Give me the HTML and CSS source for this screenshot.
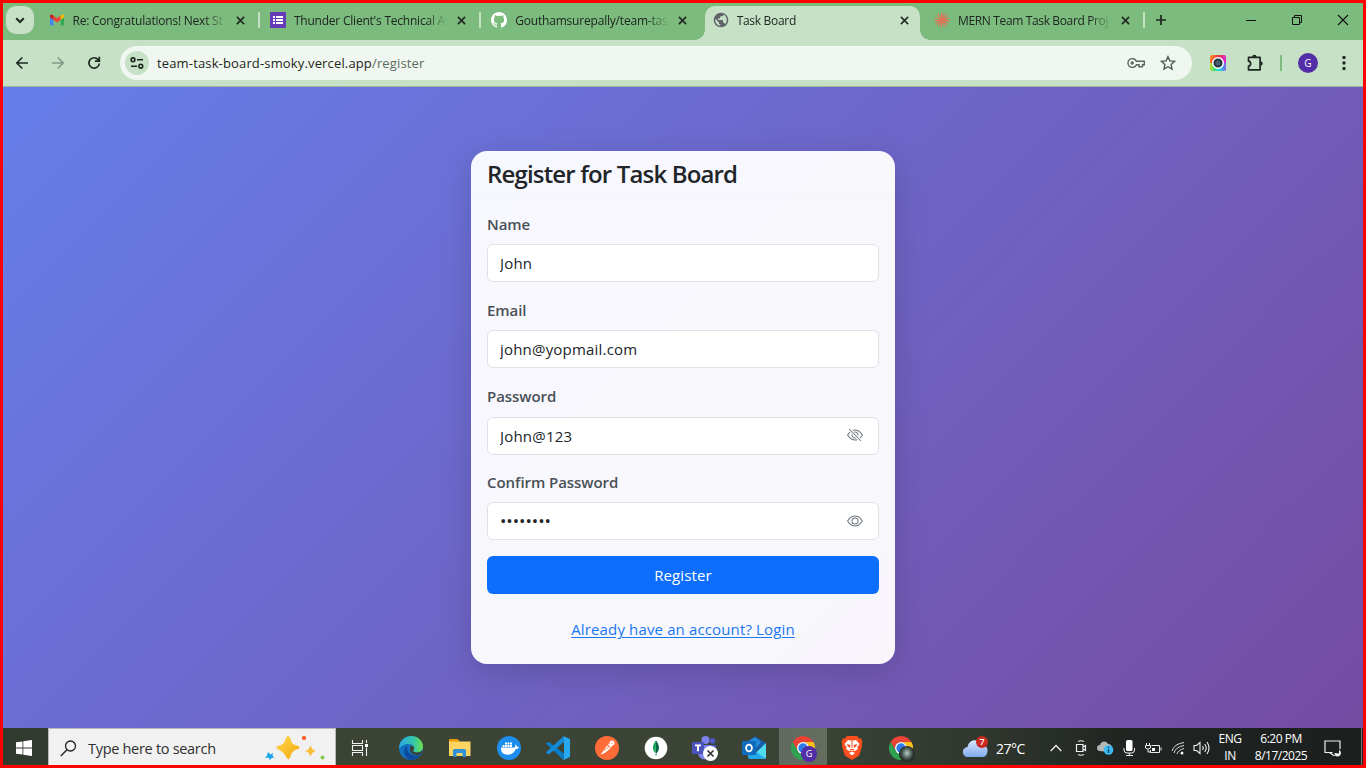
FILE: index.html
```html
<!DOCTYPE html>
<html lang="en">
<head>
<meta charset="utf-8">
<title>Task Board</title>
<link rel="stylesheet" href="styles.css">
</head>
<body>
<svg class="defs" aria-hidden="true">
  <symbol id="close" viewBox="0 0 10 10"><path d="M1 1l8 8M9 1L1 9" fill="none" stroke="#202622" stroke-width="1.7"/></symbol>
  <symbol id="chrome" viewBox="0 0 24 24">
    <path fill="#ea4335" d="M12 0a12 12 0 0 1 10.4 6H12a6 6 0 0 0-5.2 9L1.6 6A12 12 0 0 1 12 0"/>
    <path fill="#fbc116" d="M22.4 6A12 12 0 0 1 12 24l5.2-9A6 6 0 0 0 12 6z"/>
    <path fill="#30a14e" d="M12 24A12 12 0 0 1 1.6 6l5.2 9a6 6 0 0 0 10.4 0z"/>
    <circle cx="12" cy="12" r="6" fill="#fff"/><circle cx="12" cy="12" r="4.7" fill="#2e7bea"/>
  </symbol>
</svg>
<div class="screen">
  <div class="tabstrip">
    <div class="tab-search"><svg width="10" height="7" viewBox="0 0 10 7"><path d="M1.2 1.2L5 5l3.800-3.800" fill="none" stroke="#1e2620" stroke-width="2"/></svg></div>
    <div class="tab">
      <svg class="favicon" viewBox="0 0 16 16"><path fill="#4285f4" d="M1 4.500l3.300 2.400V13.500H2.200A1.200 1.200 0 0 1 1 12.300z"/><path fill="#34a853" d="M15 4.500l-3.300 2.400V13.500h2.100a1.200 1.200 0 0 0 1.200-1.200z"/><path fill="#ea4335" d="M4.300 3.500L8 6.300l3.700-2.800v4.300L8 10.500 4.300 7.800z"/><path fill="#c5221f" d="M1 4.200c0-1.700 1.800-2.300 3.300-.7v4.300L1 5.400z"/><path fill="#fbbc04" d="M15 4.200c0-1.700-1.800-2.300-3.300-.7v4.300L15 5.400z"/></svg>
      <span class="title t1">Re: Congratulations! Next St</span><svg class="x"><use href="#close"/></svg><i class="sep"></i>
    </div>
    <div class="tab">
      <svg class="favicon" viewBox="0 0 16 16"><rect width="16" height="16" rx="1" fill="#673ab7"/><path fill="#fff" d="M3 4h2v2H3zm3 0h7v2H6zM3 7h2v2H3zm3 0h7v2H6zM3 10h2v2H3zm3 0h7v2H6z"/></svg>
      <span class="title t2">Thunder Client's Technical As</span><svg class="x"><use href="#close"/></svg><i class="sep"></i>
    </div>
    <div class="tab">
      <svg class="favicon" viewBox="0 0 16 16"><path fill="#fff" d="M8 0C3.580 0 0 3.580 0 8c0 3.540 2.290 6.530 5.470 7.590.4.070.55-.17.55-.38 0-.19-.01-.82-.01-1.490-2.010.37-2.530-.49-2.690-.94-.09-.23-.48-.94-.82-1.130-.28-.15-.68-.52-.01-.53.63-.01 1.080.58 1.230.82.72 1.210 1.870.87 2.330.66.070-.52.28-.87.51-1.070-1.780-.2-3.640-.89-3.640-3.950 0-.87.31-1.590.82-2.150-.08-.2-.36-1.020.08-2.120 0 0 .67-.21 2.200.82.64-.18 1.320-.27 2-.27s1.360.09 2 .27c1.530-1.040 2.200-.82 2.200-.82.44 1.100.16 1.920.08 2.120.51.56.82 1.270.82 2.150 0 3.070-1.870 3.750-3.650 3.950.29.25.54.73.54 1.480 0 1.070-.01 1.930-.01 2.200 0 .21.15.46.55.38A8.010 8.010 0 0 0 16 8c0-4.420-3.580-8-8-8"/></svg>
      <span class="title t3">Gouthamsurepally/team-tas</span><svg class="x"><use href="#close"/></svg>
    </div>
    <div class="tab active">
      <svg class="favicon" viewBox="1 1 22 22"><path fill="#5f6368" d="M12 2C6.480 2 2 6.480 2 12s4.480 10 10 10 10-4.480 10-10S17.520 2 12 2zm-1 17.930c-3.950-.49-7-3.850-7-7.930 0-.62.08-1.210.21-1.790L9 15v1c0 1.100.9 2 2 2v1.930zm6.900-2.540c-.26-.81-1-1.390-1.900-1.390h-1v-3c0-.55-.45-1-1-1H8v-2h2c.55 0 1-.45 1-1V7h2c1.100 0 2-.9 2-2v-.41c2.930 1.190 5 4.060 5 7.410 0 2.080-.8 3.970-2.100 5.390z"/></svg>
      <span class="title t4">Task Board</span><svg class="x"><use href="#close"/></svg>
    </div>
    <div class="tab">
      <svg class="favicon" viewBox="0 0 16 16"><path d="M8 8L7.500.5M8 8l2.500-7M8 8l5.500-5M8 8l7-1.800M8 8l7.500 1M8 8l6 4.500M8 8l3 6.500M8 8l-.5 7.500M8 8l-3.500 6M8 8l-6 4.500M8 8L.5 9M8 8L1 5.500M8 8L3.500 2" stroke="#d97757" stroke-width="1.300"/></svg>
      <span class="title t5">MERN Team Task Board Proj</span><svg class="x"><use href="#close"/></svg><i class="sep"></i>
    </div>
    <svg class="plus" viewBox="0 0 12 12"><path d="M6 1v10M1 6h10" stroke="#1e2620" stroke-width="1.700"/></svg>
    <div class="winbtns">
      <svg width="12" height="12"><path d="M1 6.500h10" stroke="#111"/></svg>
      <svg width="12" height="12"><path d="M1.500 3.500h7v7h-7zM3.500 3.500v-2h7v7h-2" fill="none" stroke="#111"/></svg>
      <svg width="12" height="12"><path d="M1 1l10 10M11 1L1 11" stroke="#111" stroke-width="1.100"/></svg>
    </div>
  </div>

  <div class="toolbar">
    <div class="nav">
      <svg viewBox="0 0 14 14"><path d="M13 7H2M7.300 1.500L1.800 7l5.500 5.500" fill="none" stroke="#1e2620" stroke-width="1.600"/></svg>
      <svg viewBox="0 0 14 14"><path d="M1 7h11M6.700 1.500L12.200 7l-5.500 5.500" fill="none" stroke="#839886" stroke-width="1.600"/></svg>
      <svg viewBox="0 0 14 14"><path d="M12.300 7.500A5.200 5.200 0 1 1 11.200 3.700L12 4.500M12.300.8v4.400H8" fill="none" stroke="#1e2620" stroke-width="1.700"/></svg>
    </div>
    <div class="omnibox">
      <span class="site"><svg width="14" height="12" viewBox="0 0 14 12"><g fill="none" stroke="#1e2620" stroke-width="1.600"><circle cx="3" cy="2.800" r="1.900"/><path d="M7 2.800h6M1 9.200h6"/><circle cx="10.800" cy="9.200" r="1.900"/></g></svg></span>
      <span class="url">team-task-board-smoky.vercel.app<em>/register</em></span>
      <svg width="18" height="12" viewBox="0 0 18 12"><g fill="none" stroke="#5a665d" stroke-width="1.400"><path d="M9.400 4.300A4.400 4.400 0 1 0 9.400 7.700H12v2h3.500v-2h1.800V4.300z"/></g><circle cx="5.200" cy="6" r="1.700" fill="#5a665d"/></svg>
      <svg class="star" width="16" height="16" viewBox="0 0 16 16"><path d="M8 1.700l1.900 4.200 4.600.5-3.400 3.100.9 4.500-4-2.300L4 14l.9-4.500L1.500 6.400l4.600-.5z" fill="none" stroke="#505a53" stroke-width="1.400"/></svg>
    </div>
    <svg class="ext" width="16" height="16" viewBox="0 0 16 16"><defs><linearGradient id="ra" x2="1" y2=".3"><stop stop-color="#ff9a1c"/><stop offset=".5" stop-color="#f8383a"/><stop offset="1" stop-color="#d927d0"/></linearGradient><linearGradient id="rb" x2="1"><stop stop-color="#c5dc2c"/><stop offset=".3" stop-color="#35e07c"/><stop offset=".6" stop-color="#20d9f0"/><stop offset="1" stop-color="#8361ee"/></linearGradient></defs><path fill="url(#ra)" d="M0 8V2a2 2 0 0 1 2-2h12a2 2 0 0 1 2 2v6z"/><path fill="url(#rb)" d="M0 8v6a2 2 0 0 0 2 2h12a2 2 0 0 0 2-2V8z"/><circle cx="8" cy="8" r="5.300" fill="#263340" stroke="#fff" stroke-width="1.500"/><circle cx="8" cy="8" r="2.500" fill="#466071"/></svg>
    <svg class="puzzle" width="18" height="18" viewBox="0 0 18 18"><path d="M2.500 3.300h11.600v12.500H2.500v-3.600c2.800-.3 2.800-4.700 0-5z" fill="none" stroke="#1e2620" stroke-width="1.700" stroke-linejoin="round"/><path fill="#1e2620" d="M6.200 3a2.200 2.200 0 0 1 4.400 0zM14.500 7.300a2.200 2.200 0 0 1 0 4.400z"/></svg>
    <i class="tsep"></i>
    <span class="avatar">G</span>
    <svg class="dots" width="4" height="16"><g fill="#1e2620"><circle cx="2" cy="2.500" r="1.700"/><circle cx="2" cy="8" r="1.700"/><circle cx="2" cy="13.500" r="1.700"/></g></svg>
  </div>

  <main class="page">
    <form class="card">
      <h1 class="card-head"><span>Register for Task Board</span></h1>
      <div class="card-body">
        <div class="field"><label>Name</label><div class="box"><input type="text" value="John"></div></div>
        <div class="field"><label>Email</label><div class="box"><input type="text" value="john@yopmail.com"></div></div>
        <div class="field shown"><label>Password</label><div class="box"><input type="text" value="John@123"><svg class="eye" viewBox="0 0 16 16"><path d="M13.359 11.238C15.060 9.720 16 8 16 8s-3-5.500-8-5.500a7 7 0 0 0-2.790.588l.77.771A6 6 0 0 1 8 3.500c2.120 0 3.879 1.168 5.168 2.457A13 13 0 0 1 14.828 8q-.086.13-.195.288c-.335.48-.83 1.120-1.465 1.755q-.247.248-.517.486z"/><path d="M11.297 9.176a3.500 3.500 0 0 0-4.474-4.474l.823.823a2.500 2.500 0 0 1 2.829 2.829zm-2.943 1.299.822.822a3.500 3.500 0 0 1-4.474-4.474l.823.823a2.500 2.500 0 0 0 2.829 2.829"/><path d="M3.350 5.470q-.27.24-.518.487A13 13 0 0 0 1.172 8l.195.288c.335.48.83 1.120 1.465 1.755C4.121 11.332 5.881 12.500 8 12.500c.716 0 1.390-.133 2.020-.36l.77.772A7 7 0 0 1 8 13.500C3 13.500 0 8 0 8s.939-1.721 2.641-3.238l.708.709zm10.296 8.884-12-12 .708-.708 12 12z"/></svg></div></div>
        <div class="field"><label>Confirm Password</label><div class="box"><input class="masked" type="text" value="••••••••"><svg class="eye" viewBox="0 0 16 16"><path d="M16 8s-3-5.500-8-5.500S0 8 0 8s3 5.500 8 5.500S16 8 16 8M1.173 8a13 13 0 0 1 1.660-2.043C4.120 4.668 5.880 3.500 8 3.500s3.879 1.168 5.168 2.457A13 13 0 0 1 14.828 8q-.086.13-.195.288c-.335.48-.83 1.120-1.465 1.755C11.879 11.332 10.119 12.500 8 12.500s-3.879-1.168-5.168-2.457A13 13 0 0 1 1.172 8z"/><path d="M8 5.500a2.500 2.500 0 1 0 0 5 2.500 2.500 0 0 0 0-5M4.500 8a3.500 3.500 0 1 1 7 0 3.500 3.500 0 0 1-7 0"/></svg></div></div>
        <button class="submit" type="button">Register</button>
        <a class="login" href="#">Already have an account? Login</a>
      </div>
    </form>
  </main>

  <div class="taskbar">
    <div class="start"><svg width="16" height="16" viewBox="0 0 16 16"><path fill="#fff" d="M0 2.300l6.500-.9v6.100H0zM7.300 1.200L16 0v7.500H7.300zM0 8.400h6.500v6.200L0 13.700zM7.300 8.400H16V16l-8.700-1.200z"/></svg></div>
    <div class="search">
      <svg width="17" height="17" viewBox="0 0 17 17"><circle cx="10.500" cy="6" r="5" fill="none" stroke="#222" stroke-width="1.300"/><path d="M7 9.700L.8 16" stroke="#222" stroke-width="1.400"/></svg>
      <span>Type here to search</span>
      <svg class="sparkle" width="62" height="28" viewBox="0 0 62 28"><defs><linearGradient id="gold" x2=".8" y2="1"><stop stop-color="#ffd84d"/><stop offset="1" stop-color="#f4ad13"/></linearGradient></defs><path fill="url(#gold)" d="M24 2q2 0 3 4.500t7.500 5.500q2 1.500 0 3-6 1-7.500 6t-3 4-3-4-7.500-6q-2-1.500 0-3 6-1 7.500-5.500t3-4.500z"/><path fill="#f9bd3b" d="M46.500 11q1 5 5.500 6-4.500 1-5.500 6-1-5-5.500-6 4.500-1 5.500-6z"/><path fill="#18a5e8" d="M4 18l2.500 2.500L9 19l-.5 3 2 1.500-3 .5L6 26l-1.500-2.500L1 24l2-2.500z"/><circle cx="40" cy="4" r="2.200" fill="#f26a32"/><circle cx="58.500" cy="23.500" r="2" fill="#89ca4c"/></svg>
    </div>
    <div class="taskview"><svg width="18" height="16" viewBox="0 0 18 16"><path d="M1.500 0v3.500h10V0M1.500 16v-3.500h10V16M1.500 5.500h10v5h-10zM15.500 0v3M15.500 7.500V16" fill="none" stroke="#f2f2f2" stroke-width="1.100"/><path fill="#fff" d="M14 4h3v3h-3z"/></svg></div>
    <div class="apps">
      <div class="app"><svg viewBox="0 0 24 24"><defs><linearGradient id="e1" x2="1"><stop stop-color="#2aa7e1"/><stop offset=".6" stop-color="#36c6a8"/><stop offset="1" stop-color="#6ddf4c"/></linearGradient></defs><circle cx="12" cy="12" r="12" fill="#1271c2"/><path fill="url(#e1)" d="M.3 10C1.500 4 6.500 0 12 0c7 0 12 5 12 10.500 0 4-3 6-6 6s-4.500-1-3.500-2.300c2.400-3-1-6.200-5-6.200-4 0-8 2-9.200 5z"/><path fill="#0d4c9c" d="M8.500 9.500C7 14 10 19.500 16 19.700c2.500 0 4.500-.7 6-1.600-3 5-8.500 6.700-12.500 5.400C4 20 4 12 8.500 9.500z"/><path fill="#3a4336" d="M12.500 9.300c2.300 1 3.300 3 1.900 5-1.300 1.700 3 3.100 5.800 1.800L23 14.700 22 18c-5 2.800-11 .2-11-4.500 0-1.700.5-3.200 1.500-4.200z"/></svg></div>
      <div class="app"><svg viewBox="0 0 24 24"><path fill="#e59b0b" d="M1 3h8.500l2 2V9H1z"/><path fill="#fcd462" d="M1 5.500h21.500V20H1z"/><path fill="#2f91d8" d="M5 21v-6.500A1.500 1.500 0 0 1 6.500 13h10a1.500 1.500 0 0 1 1.500 1.500V21h-3.500v-4h-6v4z"/></svg></div>
      <div class="app"><svg viewBox="0 0 24 24"><circle cx="12" cy="12" r="12" fill="#1d8eed"/><path fill="#fff" d="M4 11.500h14c.2-1.500 0-2 .8-3 .9.800 1 1.500 1.200 2.300.7 0 1.400.1 2 .5-.7 1.400-1.700 1.800-3.300 1.800-1.600 4.100-4.300 5.600-8 5.600-4.500 0-7.200-2.600-6.700-7.200zM5.500 9h2v2h-2zM8 9h2v2H8zm2.500 0h2v2h-2zM13 9h2v2h-2zM8 6.600h2v2H8zm2.500 0h2v2h-2zm2.500 0h2v2h-2z"/></svg></div>
      <div class="app"><svg viewBox="0 0 24 24"><path fill="#087cc7" d="M1.500 6.200L0 7.700l17 15.800 1.500-5.500L3 6z"/><path fill="#168bd5" d="M17.500.2L18 6 3 18.200l-1.700-.3L0 16.300z"/><path fill="#28a8f1" d="M17.500.2L24 3v18l-6.500 3-.8-1.400c.8.300 1.300-.1 1.300-1V2.400c0-.8-.5-1.200-1.300-.9z"/></svg></div>
      <div class="app"><svg viewBox="0 0 24 24"><circle cx="12" cy="12" r="12" fill="#ff6c37"/><path fill="#fff" d="M12 9.500l3.500 2.700-6 5.100-4 1.200 2.400-3zM13 8.800l1.700-1.300 2.500 2.500-1.200 1.700z"/><circle cx="17" cy="7" r="2.500" fill="#fff"/><path d="M9 14.500l5-4M16 7.500l1.800-.8" stroke="#ff6c37" stroke-width=".8"/></svg></div>
      <div class="app"><svg viewBox="0 0 24 24"><circle cx="12" cy="12" r="11.300" fill="#fff"/><path fill="#10a153" d="M12 4.500C8 9 8 14 11.600 17.300z"/><path fill="#056743" d="M12 4.500c3.700 4.500 4 9.500.5 12.800L12.300 20h-.6z"/></svg></div>
      <div class="app"><svg class="teams" viewBox="0 0 26 26"><g transform="translate(0 1)"><circle cx="13.500" cy="4" r="4" fill="#7b83eb"/><circle cx="20.500" cy="5" r="2.800" fill="#5059c9"/><path fill="#5059c9" d="M17 9h7v7a5 5 0 0 1-6 5z"/><path fill="#7b83eb" d="M6 9h13v8a6.500 6.500 0 0 1-13 0z"/><rect y="6" width="12" height="12" rx="1" fill="#4b53bc"/><path fill="#fff" d="M3 8.500h6v1.700H7v5H5v-5H3z"/></g><circle cx="18.500" cy="18.500" r="7.500" fill="#fff"/><path d="M15.500 15.500l6 6m0-6l-6 6" stroke="#333" stroke-width="1.700"/></svg></div>
      <div class="app"><svg viewBox="0 0 24 24"><path fill="#185ca8" d="M5 6l8-5.500L24 7v8H5z"/><path fill="#238bdb" d="M5 6l8-5 6 5-8 10-6-2z"/><path fill="#4fdcf1" d="M24 7v14a2 2 0 0 1-2 2H7z"/><path fill="#23a8ea" d="M6 16l7-1 11 8H8a2 2 0 0 1-2-2z"/><rect y="5" width="14" height="14" rx="1.300" fill="#0f6cbd"/><ellipse cx="7" cy="12" rx="2.900" ry="3.400" fill="none" stroke="#fff" stroke-width="1.800"/></svg></div>
      <div class="app current"><svg><use href="#chrome"/></svg><span class="badge">G</span></div>
      <div class="app"><svg viewBox="0 0 24 24"><path fill="#fb4f20" d="M7 0h10l2 2.500 2-.3L22.500 6l-.8 2 .4 2-3 9.500L12 24l-7.100-4.500-3-9.500.4-2-.8-2L3 2.200l2 .3z"/><path fill="#fff" d="M8 4l4 .7L16 4l3.500 4-2.200 3 .7 2-3 2-1.800-.6-1.200.9-1.200-.9L9 15l-3-2 .7-2-2.200-3zM9 17l3-1.600 3 1.600-3 2.500z"/><path fill="#fb4f20" d="M6.500 8l4 1-.5 3-2-1.500zM17.500 8l-4 1 .5 3 2-1.500zM11.500 5h1v7h-1zM9 13h6l-3 1.500z"/></svg></div>
      <div class="app"><svg><use href="#chrome"/></svg><span class="badge photo"></span></div>
    </div>
    <div class="tray">
      <div class="slot weather"><svg width="26" height="17" viewBox="0 0 26 17"><defs><linearGradient id="cl" x2="0" y2="1"><stop stop-color="#d9e7ff"/><stop offset="1" stop-color="#7fa9ec"/></linearGradient></defs><path fill="url(#cl)" d="M5 17a5 5 0 0 1-.5-10C6-1 15-2 18 5c5-.5 7 3 6.500 6.500-.3 3.500-2 5.500-5 5.500z"/></svg><span class="count">7</span></div>
      <div class="slot temp">27°C</div>
      <div class="slot s24"><svg width="12" height="8"><path d="M.7 7L6 1.500 11.300 7" fill="none" stroke="#eee" stroke-width="1.300"/></svg></div>
      <div class="slot s25"><svg width="12" height="16" viewBox="0 0 12 16"><g fill="none" stroke="#eee" stroke-width="1.200"><path d="M3 1.500q3-1.500 6 0M3 14.500q3 1.500 6 0M1.500 4.500H8v7H1.500zM8 7l2.500-1.500v5L8 9"/></g></svg></div>
      <div class="slot s24"><svg width="17" height="14" viewBox="0 0 17 14"><path fill="#b4b8b7" d="M3 10a3 3 0 0 1 0-6c1-4 6-5 8-1 3 0 4 2 4 4l-4 4z"/><circle cx="11.500" cy="9" r="4.800" fill="#3ebaf2"/><path fill="#0a5173" d="M10.800 8h1.500v4h-1.500zM10.800 5.800h1.500v1.300h-1.500z"/></svg></div>
      <div class="slot s24"><svg width="12" height="16" viewBox="0 0 12 16"><rect x="3" width="6.500" height="11" rx="1.500" fill="#fff"/><path d="M1 8v2q0 3 3 3h4.500q3 0 3-3V8M6.300 13v2.500M3 15.500h7" fill="none" stroke="#eee"/></svg></div>
      <div class="slot s24"><svg width="17" height="13" viewBox="0 0 17 13"><path d="M6.500 3.500h8v7h-9V8M16 5.500v3M1.500 1v2M4.500 1v2M.5 3.500h5V6q-2.500 2.500-5 0zM3 7.500V10h2" fill="none" stroke="#eee"/><path fill="#fff" d="M7 6h3v3H7z"/></svg></div>
      <div class="slot s26"><svg width="14" height="14" viewBox="0 0 14 14"><g fill="none" stroke="#ddd"><path d="M1 10Q3 3 13 1.500"/><path d="M3 12Q4.500 6 13 4.500"/><path d="M6 13Q7 9 13 7.500"/></g><circle cx="11" cy="12" r="1.500" fill="#fff"/></svg></div>
      <div class="slot s20"><svg width="17" height="14" viewBox="0 0 17 14"><path d="M1 4.500h2.500L7 1.500v11L3.500 9.500H1zM9.500 5q1.500 2 0 4M11.700 3q3 4 0 8M14 1q4 6 0 12" fill="none" stroke="#eee" stroke-width="1.100"/></svg></div>
      <div class="slot lang"><span>ENG</span><span>IN</span></div>
      <div class="slot clock"><span>6:20 PM</span><span>8/17/2025</span></div>
      <div class="slot note"><svg width="18" height="18" viewBox="0 0 18 18"><path d="M8.500 13.500H1V2h15v8M5.500 13.500L10.500 17" fill="none" stroke="#eee" stroke-width="1.200"/><path fill="#eee" d="M15 10.500v4l-4.500-.5q0 3.500 3 3.500t3.500-3.500q0-2-2-3.500z"/></svg></div>
      <i class="peek"></i>
    </div>
  </div>
  <div class="frame"></div>
</div>
</body>
</html>
```
FILE: styles.css
```css
* { box-sizing: border-box; }
html, body { margin: 0; }
body { font-family: "Open Sans", "Noto Sans", sans-serif; font-size: 12px; color: #202622; }
svg { display: block; flex: none; }
.defs { display: none; }
.screen { position: relative; width: 1366px; height: 768px; overflow: hidden; display: flex; flex-direction: column; }
.frame { position: absolute; inset: 0; border: 3px solid #f00; pointer-events: none; }

/* Tab strip */
.tabstrip { height: 40px; flex: none; background: #7bbb7d; display: flex; align-items: center; padding-left: 6px; }
.tab-search { width: 28px; height: 28px; border-radius: 10px; background: #c6e1c6; display: grid; place-items: center; margin-right: 6.500px; }
.tab { position: relative; width: 221.4px; height: 34px; flex: none; display: flex; align-items: center; padding-left: 8px; }
.favicon { width: 16px; height: 16px; margin-right: 8px; }
.title { width: 156px; padding-top: 2px; overflow: hidden; white-space: nowrap; line-height: 18px; -webkit-mask-image: linear-gradient(90deg, #000 132px, transparent 154px); mask-image: linear-gradient(90deg, #000 132px, transparent 154px); }
.t1 { letter-spacing: -.22px; }
.t2 { letter-spacing: -.22px; }
.t3 { letter-spacing: -.2px; }
.t4 { letter-spacing: -.3px; }
.t5 { letter-spacing: -.36px; }
.x { width: 9px; height: 9px; margin-left: 7px; }
.sep { width: 2px; height: 16px; border-radius: 1px; background: #c6e1c6; margin-left: 13px; }
.active { z-index: 1; height: 34px; margin-top: 6px; padding-bottom: 6px; }
.active::before { content: ""; position: absolute; z-index: -1; inset: 0 6px 0 .1px; background: #c6e1c6; border-radius: 10px 10px 0 0; }
.active::after { content: ""; position: absolute; z-index: -1; left: -9.900px; right: -4px; bottom: 0; height: 10px; background: radial-gradient(circle at 0 0, transparent 9.500px, #c6e1c6 10px) left / 10px 10px no-repeat, radial-gradient(circle at 100% 0, transparent 9.500px, #c6e1c6 10px) right / 10px 10px no-repeat; }
.plus { width: 12px; height: 12px; margin-left: 7.500px; }
.winbtns { margin-left: auto; margin-right: 17px; display: flex; gap: 34px; }

/* Toolbar */
.toolbar { height: 47px; flex: none; background: #c6e1c6; border-bottom: 1px solid #9db59d; display: flex; align-items: center; }
.nav { display: flex; gap: 22px; margin-left: 15px; width: 105px; }
.nav svg { width: 14px; height: 14px; }
.omnibox { width: 1072px; height: 34px; border-radius: 17px; background: #f0f7f0; display: flex; align-items: center; padding: 0 16px 0 5px; }
.site { width: 24px; height: 24px; border-radius: 50%; background: #c6e1c6; display: grid; place-items: center; margin-right: 8px; }
.url { flex: 1; font-size: 13px; letter-spacing: .15px; color: #1e2620; }
.url em { font-style: normal; color: #5d6a60; }
.star { margin-left: 15px; }
.ext { margin-left: 18px; }
.puzzle { margin-left: 20px; }
.tsep { width: 2px; height: 16px; background: #7bbb7d; margin-left: 16px; }
.avatar { width: 20px; height: 20px; border-radius: 50%; background: #512da8; color: #fff; font-size: 10px; line-height: 20px; text-align: center; margin-left: 16px; }
.dots { margin-left: 24px; }

/* Registration page */
.page { height: 641px; flex: none; background: linear-gradient(135deg, #667eea, #764ba2); display: flex; justify-content: center; align-items: flex-start; padding-top: 64px; }
.card { width: 424px; height: 513px; border-radius: 16px; background: rgba(255, 255, 255, .95); box-shadow: 0 8px 32px rgba(0, 0, 0, .15); overflow: hidden; font-size: 16px; }
.card-head { margin: 0; height: 44px; padding: 8px 16px 0; font-size: 24px; font-weight: 600; line-height: 30px; letter-spacing: -.84px; color: #212529; border-bottom: 1px solid rgba(0, 0, 0, .01); }
.card-body { padding: 17px 16px; display: flex; flex-direction: column; }
.field { margin-bottom: 16px; }
.field label { display: block; line-height: 24px; font-weight: 600; color: #495057; margin-bottom: 8px; font-size: 15px; letter-spacing: -.06px; }
.box { position: relative; }
.shown .box { margin-top: 9px; margin-bottom: -1px; }
.box input { display: block; width: 100%; height: 38px; padding: 0 12px 1px; border: 1px solid #dee2e6; border-radius: 6px; background: #fff; font: 15px "Open Sans", sans-serif; letter-spacing: .2px; color: #212529; outline: 0; }
.box .masked { font-size: 17px; letter-spacing: -.02px; }
.eye { position: absolute; right: 16px; top: 11px; width: 16px; height: 16px; fill: #6c757d; }
.shown .eye { top: 10px; }
.submit { height: 38px; border: 0; border-radius: 6px; background: #0d6efd; color: #fff; font: 500 15px "Open Sans", sans-serif; letter-spacing: .12px; padding: 0; }
.login { align-self: center; margin-top: 23px; line-height: 24px; color: #1b78f5; text-underline-offset: 2px; font-size: 15px; letter-spacing: .14px; }

/* Taskbar */
.taskbar { height: 40px; flex: none; display: flex; background: linear-gradient(90deg, #303a2f, #3c4535 30%, #3a4336 60%, #30372e 72%, #202522 82%, #1b201f); }
.start { width: 48px; display: grid; place-items: center; }
.search { width: 288px; background: #f1f1f1; border: 1px solid #b8b8b8; display: flex; align-items: center; padding-left: 11px; font-size: 14.500px; color: #303030; }
.search span { margin-left: 11px; width: 166px; letter-spacing: -.3px; white-space: nowrap; }
.sparkle { margin-left: 10px; }
.taskview { width: 50px; padding-left: 15px; display: flex; align-items: center; }
.apps { display: flex; }
.app { position: relative; width: 49px; display: grid; place-items: center; }
.app > svg { width: 24px; height: 24px; }
.app > .teams { width: 26px; height: 26px; }
.current { background: linear-gradient(90deg, transparent 1px, #616a5e 1px, #646d60); }
.badge { position: absolute; left: 23px; top: 18px; width: 16px; height: 16px; border-radius: 50%; background: #512da8; color: #fff; font-size: 9px; line-height: 16px; text-align: center; }
.photo { background: radial-gradient(ellipse at 50% 45%, #a5b8b2 0 8%, #6f8780 25%, #39443e 50%, #18201d 75%); }
.tray { display: flex; flex: 1; color: #fff; padding-left: 39px; }
.slot { position: relative; display: flex; align-items: center; justify-content: center; flex: none; }
.weather { width: 24px; }
.count { position: absolute; left: 12px; top: 8px; width: 12px; height: 12px; border-radius: 50%; background: #c92a20; font-size: 9px; font-weight: 600; line-height: 12px; text-align: center; }
.temp { width: 56px; justify-content: flex-start; padding-left: 8px; font-size: 14px; letter-spacing: -.5px; }
.s25 { width: 25px; }
.s24 { width: 24px; }
.s26 { width: 26px; }
.s20 { width: 20px; }
.lang, .clock { flex-direction: column; font-size: 12px; line-height: 17px; padding-bottom: 2px; letter-spacing: -.4px; }
.clock { letter-spacing: -.5px; }
.lang { width: 38px; }
.clock { width: 64px; }
.note { width: 40px; }
.peek { width: 1px; height: 40px; background: #777; margin-left: 8px; }
```
